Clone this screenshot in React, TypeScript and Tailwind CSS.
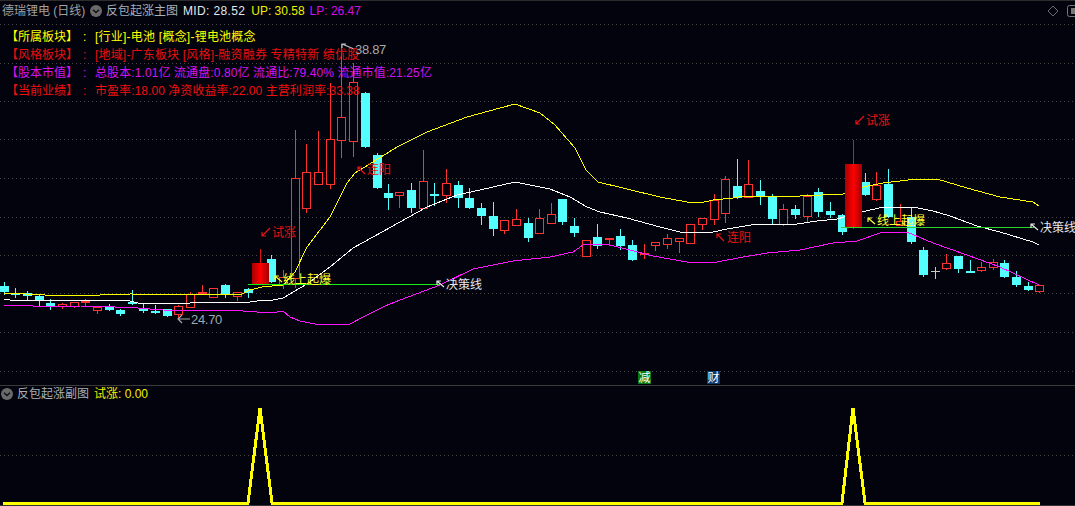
import React from "react";

type Candle = [number, "c" | "r" | "f" | "g", number, number, number, number];

// x, kind (c cyan, r hollow red, f solid red, g big gradient red), high, top, bottom, low
const candles: Candle[] = [
  [4, "c", 282, 286, 292, 294],
  [15, "c", 288, 293, 295, 297],
  [27, "c", 291, 293, 296, 300],
  [39, "c", 294, 296, 300, 305],
  [50, "c", 299, 303, 306, 309],
  [62, "r", 303, 304, 306, 309],
  [74, "r", 302, 302, 306, 308],
  [85, "f", 299, 301, 303, 305],
  [97, "r", 306, 307, 310, 314],
  [109, "c", 304, 307, 310, 310],
  [120, "c", 309, 310, 314, 315],
  [132, "c", 290, 302, 303, 304],
  [143, "c", 304, 308, 311, 312],
  [155, "c", 305, 311, 312, 313],
  [167, "c", 309, 309, 316, 316],
  [178, "r", 305, 306, 314, 320],
  [190, "r", 292, 294, 307, 308],
  [202, "f", 285, 292, 294, 294],
  [213, "r", 288, 288, 297, 297],
  [225, "c", 284, 285, 294, 297],
  [237, "r", 292, 292, 296, 301],
  [248, "c", 288, 289, 293, 297],
  [271, "c", 255, 259, 282, 282],
  [283, "r", 270, 277, 284, 289],
  [295, "r", 130, 178, 278, 288],
  [306, "r", 144, 172, 208, 213],
  [318, "r", 131, 172, 184, 184],
  [330, "r", 83, 139, 184, 189],
  [341, "r", 44, 117, 140, 158],
  [353, "r", 63, 82, 141, 157],
  [365, "c", 92, 93, 147, 147],
  [377, "c", 153, 155, 188, 188],
  [388, "c", 184, 193, 198, 209],
  [399, "r", 192, 192, 195, 208],
  [411, "c", 183, 190, 208, 212],
  [423, "r", 150, 181, 208, 208],
  [434, "c", 183, 194, 195, 205],
  [446, "r", 169, 183, 195, 203],
  [458, "c", 181, 185, 198, 207],
  [469, "c", 188, 198, 208, 208],
  [481, "c", 203, 208, 216, 224],
  [493, "c", 202, 216, 229, 235],
  [504, "r", 220, 220, 230, 234],
  [516, "r", 209, 219, 225, 225],
  [528, "c", 218, 223, 238, 241],
  [539, "r", 209, 218, 233, 233],
  [551, "r", 203, 214, 223, 223],
  [562, "c", 199, 199, 222, 224],
  [574, "c", 218, 226, 233, 236],
  [586, "r", 240, 240, 256, 256],
  [597, "c", 224, 237, 246, 248],
  [609, "f", 238, 238, 240, 245],
  [620, "c", 229, 236, 246, 249],
  [632, "c", 240, 245, 260, 260],
  [644, "f", 244, 253, 254, 258],
  [655, "r", 242, 242, 245, 251],
  [667, "r", 234, 238, 244, 249],
  [679, "r", 238, 238, 241, 253],
  [690, "r", 224, 224, 243, 243],
  [702, "r", 218, 218, 224, 230],
  [714, "r", 194, 200, 219, 225],
  [725, "r", 176, 179, 213, 223],
  [737, "c", 159, 186, 198, 198],
  [748, "r", 160, 184, 197, 197],
  [760, "c", 180, 191, 197, 204],
  [772, "c", 194, 197, 219, 223],
  [783, "r", 204, 209, 224, 226],
  [795, "c", 205, 209, 215, 218],
  [807, "r", 194, 196, 216, 222],
  [818, "c", 188, 192, 212, 216],
  [830, "c", 202, 211, 215, 217],
  [842, "c", 214, 215, 232, 234],
  [865, "c", 173, 182, 195, 195],
  [876, "r", 172, 185, 199, 201],
  [888, "c", 169, 184, 217, 217],
  [900, "r", 204, 221, 225, 225],
  [911, "c", 207, 217, 242, 243],
  [923, "c", 247, 250, 275, 276],
  [946, "r", 254, 263, 268, 270],
  [958, "c", 256, 256, 269, 272],
  [970, "c", 260, 271, 272, 272],
  [981, "r", 262, 267, 270, 272],
  [993, "r", 259, 262, 267, 270],
  [1004, "c", 260, 263, 277, 277],
  [1016, "c", 271, 277, 285, 286],
  [1028, "c", 282, 286, 290, 290],
  [1039, "r", 285, 285, 291, 293],
];

const upLine =
  "4,293 45,295 100,295 130,294 240,295 250,290 262,287 283,285 295,272 307,247 330,217 347,183 355,173 373,162 397,147 427,132 467,117 500,108 515,104 540,113 555,125 568,140 575,148 586,170 598,182 627,189 660,197 687,202 700,203 713,200 733,198 743,196 800,196 843,194 863,187 883,183 917,179 937,179 967,188 1000,197 1033,202 1039,206";
const midLine =
  "4,299 10,300 115,300 130,301 138,303 190,303 200,302 250,302 257,301 273,300 283,298 300,288 307,284 330,267 353,248 373,237 400,222 427,207 457,195 480,190 515,182 550,189 570,197 587,207 600,212 627,218 660,227 680,232 713,232 727,229 757,224 797,224 817,221 837,219 862,212 883,207 913,207 933,211 950,216 977,226 1000,232 1033,242 1039,245";
const lowLine =
  "4,305 33,306 80,306 115,307 138,308 150,309 163,310 243,311 257,312 277,312 283,311 290,317 300,321 320,325 350,324 365,316 385,306 400,300 440,285 473,269 493,265 513,261 550,257 573,252 583,245 593,244 610,245 630,250 653,256 687,262 717,262 743,257 767,253 800,250 833,243 857,241 883,232 907,232 933,243 967,255 1000,267 1039,285";
const grid = [24, 63, 101, 139, 178, 217, 255, 293, 332, 371];

const legend = [
  {
    label: "【所属板块】",
    text: "[行业]-电池 [概念]-锂电池概念",
    color: "text-[#ffff00]",
    spacing: "tracking-[0.23px]",
  },
  {
    label: "【风格板块】",
    text: "[地域]-广东板块 [风格]-融资融券 专精特新 绩优股",
    color: "text-[#e81010]",
    spacing: "tracking-[0.18px]",
  },
  {
    label: "【股本市值】",
    text: "总股本:1.01亿 流通盘:0.80亿 流通比:79.40% 流通市值:21.25亿",
    color: "text-[#d414f0]",
    spacing: "tracking-[0.1px]",
  },
  {
    label: "【当前业绩】",
    text: "市盈率:18.00 净资收益率:22.00 主营利润率:33.38",
    color: "text-[#f01010]",
    spacing: "tracking-[0.06px]",
  },
];

const CandleMark = ({ c }: { c: Candle }) => {
  const [x, kind, hi, top, bot, lo] = c;
  const color = kind === "c" ? "#54ffff" : "#ff3232";
  if (kind === "c" || kind === "f") {
    return (
      <g fill={color} stroke="none">
        <rect x={x} y={hi} width={1} height={lo - hi + 1} />
        <rect x={x - 4} y={top} width={9} height={Math.max(bot - top, 2)} />
      </g>
    );
  }
  return (
    <g stroke={color} fill="#02030c">
      <path d={`M${x + 0.5} ${hi}V${top}M${x + 0.5} ${bot}V${lo}`} />
      <rect x={x - 3.5} y={top + 0.5} width={8} height={bot - top} />
    </g>
  );
};

const BigCandle = ({
  x,
  hi,
  top,
  bot,
  lo,
}: {
  x: number;
  hi: number;
  top: number;
  bot: number;
  lo: number;
}) => (
  <g>
    <rect x={x} y={hi} width={1} height={lo - hi} fill="#e01414" />
    <rect x={x - 8} y={top} width={17} height={bot - top} fill="url(#redBody)" />
  </g>
);

const MarkArrow = ({ d, color }: { d: string; color: string }) => (
  <path d={d} stroke={color} fill="none" strokeWidth={1.2} />
);

const CircleToggle = () => (
  <svg width="12" height="12" viewBox="0 0 12 12" className="shrink-0">
    <circle cx="6" cy="6" r="6" fill="#6a6a6a" />
    <path d="M3 4.8 6 7.6 9 4.8" fill="none" stroke="#101018" strokeWidth="1.4" />
  </svg>
);

const ChartLabel = ({
  className,
  children,
}: {
  className: string;
  children: React.ReactNode;
}) => (
  <span className={`absolute text-xs leading-none whitespace-nowrap ${className}`}>
    {children}
  </span>
);

export default function App() {
  return (
    <div className="flex h-[506px] w-[1075px] flex-col overflow-hidden bg-[#02030c] font-['Liberation_Sans','Noto_Sans_CJK_SC',sans-serif] text-xs">
      {/* main chart */}
      <div className="relative h-[385px] border-t border-[#2c2c2c]">
        <svg
          className="absolute left-0 top-[-1px]"
          width="1075"
          height="385"
          viewBox="0 0 1075 385"
          shapeRendering="crispEdges"
          fill="none"
        >
          <defs>
            <linearGradient id="redBody" x1="0" x2="1" y1="0" y2="0">
              <stop offset="0" stopColor="#a80000" />
              <stop offset="0.5" stopColor="#ff0000" />
              <stop offset="1" stopColor="#a00000" />
            </linearGradient>
          </defs>
          {grid.map((y) => (
            <line
              key={y}
              x1="0"
              x2="1075"
              y1={y + 0.5}
              y2={y + 0.5}
              stroke="#484848"
              strokeDasharray="1 3"
            />
          ))}
          {candles.map((c) => (
            <CandleMark key={c[0]} c={c} />
          ))}
          {/* white doji */}
          <path d="M935.5 267V279M931 271.5H940" stroke="#c8c8c8" />
          <polyline points={upLine} stroke="#ffff00" />
          <polyline points={midLine} stroke="#ffffff" />
          <polyline points={lowLine} stroke="#ff14ff" />
          <BigCandle x={260} hi={249} top={263} bot={284} lo={284} />
          <BigCandle x={853} hi={140} top={164} bot={227} lo={229} />
          <line x1="248" x2="440" y1="284.5" y2="284.5" stroke="#14f014" />
          <line x1="841" x2="1034" y1="227.5" y2="227.5" stroke="#2ed42e" />
          <g shapeRendering="auto">
            <MarkArrow d="M270 228 262 236M262 232V236H266" color="#e81414" />
            <MarkArrow d="M282 282 275 276M275 280V276H279" color="#ffff30" />
            <MarkArrow d="M444 287 437 281M437 285V281H441" color="#e8e8e8" />
            <MarkArrow d="M365 174 358 167M358 171V167H362" color="#e81414" />
            <MarkArrow d="M724 241 717 234M717 238V234H721" color="#e81414" />
            <MarkArrow d="M864 116 856 124M856 120V124H860" color="#e81414" />
            <MarkArrow d="M875 224 868 218M868 222V218H872" color="#ffff30" />
            <MarkArrow d="M1038 230 1031 224M1031 228V224H1035" color="#e8e8e8" />
            <MarkArrow d="M190 319H178M182 315 178 319 182 323" color="#a8a8a8" />
            <MarkArrow d="M354 49 342 44M346 44H342V48" color="#c0c0c0" />
          </g>
        </svg>

        <ChartLabel className="left-[272px] top-[226px] text-[#e81414]">试涨</ChartLabel>
        <ChartLabel className="left-[283px] top-[273px] text-[#ffff30]">线上起爆</ChartLabel>
        <ChartLabel className="left-[446px] top-[278px] text-[#e8e8f0]">决策线</ChartLabel>
        <ChartLabel className="left-[367px] top-[163px] text-[#e81414]">连阳</ChartLabel>
        <ChartLabel className="left-[727px] top-[231px] text-[#e81414]">连阳</ChartLabel>
        <ChartLabel className="left-[866px] top-[114px] text-[#e81414]">试涨</ChartLabel>
        <ChartLabel className="left-[877px] top-[214px] text-[#ffff30]">线上起爆</ChartLabel>
        <ChartLabel className="left-[1040px] top-[221px] text-[#e8e8f0]">决策线</ChartLabel>
        <ChartLabel className="left-[191px] top-[312px] text-[13px] tracking-[-0.3px] text-[#a0a8b0]">24.70</ChartLabel>
        <ChartLabel className="left-[355px] top-[42px] text-[13px] tracking-[-0.3px] text-[#a8a8a8]">38.87</ChartLabel>
        <span className="absolute left-[638px] top-[370px] flex h-[13px] w-[13px] items-center justify-center bg-[#087a10] text-xs leading-none text-white">
          减
        </span>
        <span className="absolute left-[707px] top-[370px] flex h-[13px] w-[13px] items-center justify-center bg-[#0c3a6c] text-xs leading-none text-white">
          财
        </span>

        {/* header */}
        <div className="relative flex h-[19px] items-center">
          <span className="ml-[2px] w-[88px] whitespace-nowrap text-xs text-[#a0a0a0]">德瑞锂电 (日线)</span>
          <CircleToggle />
          <span className="ml-[4px] whitespace-nowrap text-xs text-[#a8b0b8]">反包起涨主图</span>
          <span className="ml-[5px] whitespace-nowrap text-xs tracking-[0.35px] text-[#e0e8f0]">MID: 28.52</span>
          <span className="ml-[6px] whitespace-nowrap text-xs text-[#f0f000]">UP: 30.58</span>
          <span className="ml-[5px] whitespace-nowrap text-xs text-[#d010e8]">LP: 26.47</span>
          <div className="ml-auto flex items-center gap-[8px]">
            <svg width="12" height="12" viewBox="0 0 12 12">
              <path d="M6 1 11 6 6 11 1 6Z" fill="none" stroke="#6a6a6a" />
            </svg>
            <svg width="8" height="12" viewBox="0 0 8 12">
              <rect x="0.5" y="0.5" width="14" height="11" rx="2" fill="none" stroke="#777" />
              <rect x="4" y="3" width="6" height="6" fill="#777" />
            </svg>
          </div>
        </div>

        {/* stock info */}
        <div className="relative mt-[8px] flex flex-col pl-[6px]">
          {legend.map((row) => (
            <div key={row.label} className={`flex h-[18px] items-center ${row.color}`}>
              <span className="w-[72px]">{row.label}</span>
              <span className="w-[17px] pl-[5px]">:</span>
              <span className={`whitespace-nowrap ${row.spacing}`}>{row.text}</span>
            </div>
          ))}
        </div>
      </div>

      {/* sub chart */}
      <div className="relative flex-1 border-t border-[#3a3a3a]">
        <svg
          className="absolute left-0 top-0"
          width="1075"
          height="120"
          viewBox="0 386 1075 120"
          shapeRendering="crispEdges"
          fill="none"
        >
          <line x1="0" x2="1075" y1="455.5" y2="455.5" stroke="#484848" strokeDasharray="1 3" />
          <polyline
            points="3,503 248,503 260,408 272,503 842,503 853,408 865,503 1040,503"
            stroke="#ffff00"
            strokeWidth="3"
          />
          <line x1="0" x2="1075" y1="505.5" y2="505.5" stroke="#333333" />
        </svg>
        <div className="relative flex h-[16px] items-center pl-[1px]">
          <CircleToggle />
          <span className="ml-[4px] text-xs text-[#a8b0b8]">反包起涨副图</span>
          <span className="ml-[5px] text-xs text-[#f0f000]">试涨: 0.00</span>
        </div>
      </div>
    </div>
  );
}
